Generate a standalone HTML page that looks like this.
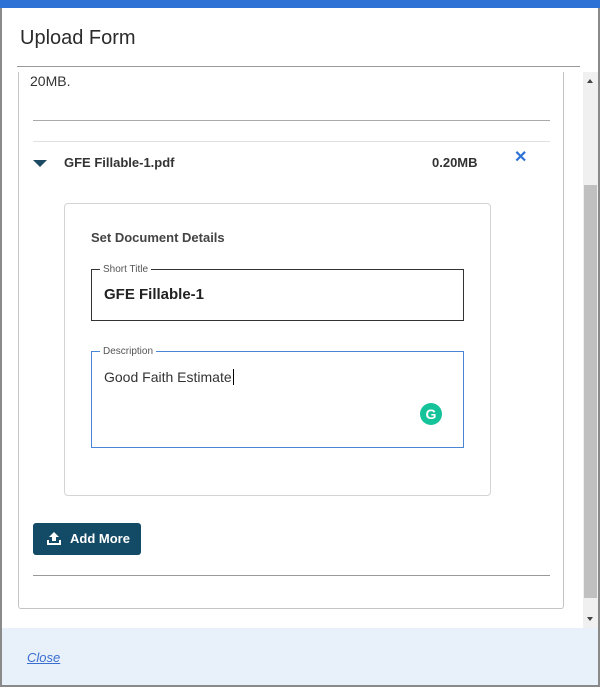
<!DOCTYPE html>
<html><head><meta charset="utf-8"><style>
*{margin:0;padding:0;box-sizing:border-box}
body{width:600px;height:687px;overflow:hidden;background:#fff;font-family:"Liberation Sans",sans-serif;color:#222;position:relative}
.a{position:absolute}
</style></head><body>
<div class="a" style="left:0;top:0;width:600px;height:8px;background:#2f72d6"></div>
<div class="a" style="left:0;top:8px;width:2px;height:679px;background:#8a8a8a"></div>
<div class="a" style="left:598px;top:8px;width:2px;height:679px;background:#8a8a8a"></div>
<div class="a" style="left:20px;top:27px;font-size:20px;color:#2b2b2b">Upload Form</div>
<div class="a" style="left:17px;top:66px;width:563px;height:1px;background:#999"></div>
<div class="a" style="left:18px;top:72px;width:546px;height:537px;border:1px solid #c4c4c4;border-top:none;border-radius:0 0 3px 3px"></div>
<div class="a" style="left:30px;top:73px;font-size:14px;color:#333">20MB.</div>
<div class="a" style="left:33px;top:120px;width:517px;height:1px;background:#aaa"></div>
<div class="a" style="left:33px;top:141px;width:517px;height:1px;background:#e0e0e0"></div>
<div class="a" style="left:33px;top:160px;width:0;height:0;border-left:7px solid transparent;border-right:7px solid transparent;border-top:7px solid #1c4a62"></div>
<div class="a" style="left:64px;top:155px;font-size:13px;font-weight:bold;color:#333">GFE Fillable-1.pdf</div>
<div class="a" style="left:432px;top:155px;font-size:13px;font-weight:bold;color:#333">0.20MB</div>
<div class="a" style="left:514px;top:147px;font-size:16px;font-weight:bold;color:#2f72d6">✕</div>
<div class="a" style="left:64px;top:203px;width:427px;height:293px;border:1px solid #d4d4d4;border-radius:4px"></div>
<div class="a" style="left:91px;top:230px;font-size:13px;font-weight:bold;color:#444">Set Document Details</div>
<div class="a" style="left:91px;top:269px;width:373px;height:52px;border:1.5px solid #333"></div>
<div class="a" style="left:100px;top:264px;font-size:10px;color:#555;background:#fff;padding:0 3px">Short Title</div>
<div class="a" style="left:104px;top:286px;font-size:15px;font-weight:bold;color:#222">GFE Fillable-1</div>
<div class="a" style="left:91px;top:351px;width:373px;height:97px;border:1px solid #4a86d8"></div>
<div class="a" style="left:100px;top:346px;font-size:10px;color:#555;background:#fff;padding:0 3px">Description</div>
<div class="a" style="left:104px;top:369px;font-size:14px;color:#333">Good Faith Estimate<span style="border-right:1px solid #000;margin-left:1px"></span></div>
<div class="a" style="left:420px;top:403px;width:22px;height:22px;border-radius:50%;background:#15c39a;color:#fff;font-size:14px;font-weight:bold;text-align:center;line-height:22px">G</div>
<div class="a" style="left:33px;top:523px;width:108px;height:32px;background:#134b66;border-radius:3px"></div>
<svg class="a" style="left:46px;top:530px" width="16" height="16" viewBox="0 0 16 16"><path d="M8 2 L3 7 H6 V11 H10 V7 H13 Z" fill="#fff"/><path d="M2 10 V14 H14 V10" stroke="#fff" stroke-width="2" fill="none"/></svg>
<div class="a" style="left:70px;top:531px;font-size:13px;font-weight:bold;color:#fff">Add More</div>
<div class="a" style="left:33px;top:575px;width:517px;height:1px;background:#999"></div>
<div class="a" style="left:583px;top:72px;width:15px;height:556px;background:#f0f0f0"></div>
<div class="a" style="left:584px;top:185px;width:13px;height:413px;background:#c0c0c0"></div>
<div class="a" style="left:587px;top:79px;width:0;height:0;border-left:3px solid transparent;border-right:3px solid transparent;border-bottom:4px solid #444"></div>
<div class="a" style="left:587px;top:617px;width:0;height:0;border-left:3px solid transparent;border-right:3px solid transparent;border-top:4px solid #444"></div>
<div class="a" style="left:2px;top:628px;width:596px;height:57px;background:#e8f0fa"></div>
<div class="a" style="left:27px;top:650px;font-size:13px;font-style:italic;color:#3a6fd0;text-decoration:underline">Close</div>
<div class="a" style="left:0;top:685px;width:600px;height:2px;background:#8a8a8a"></div>
</body></html>
